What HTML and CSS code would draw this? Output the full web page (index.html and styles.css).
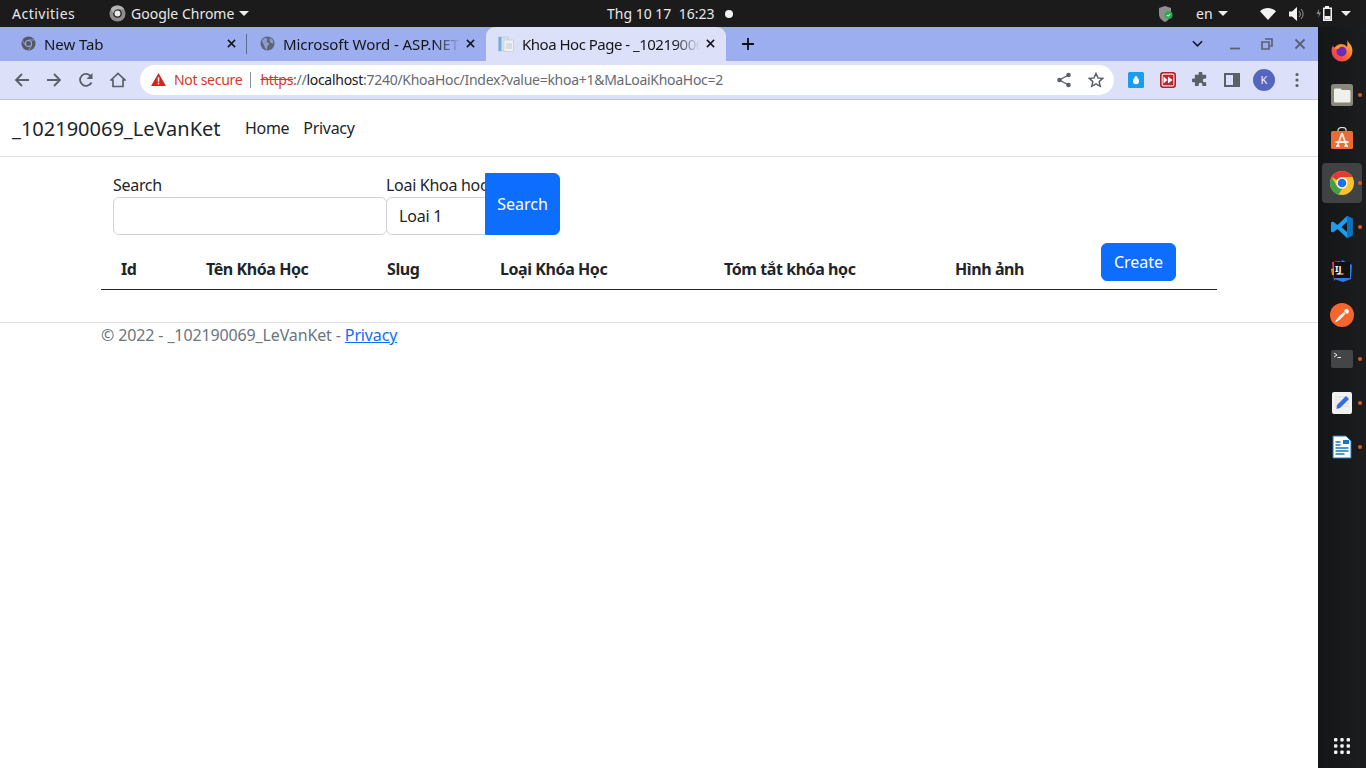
FILE: index.html
```html
<!DOCTYPE html>
<html lang="vi">
<head>
<meta charset="utf-8">
<title>Khoa Hoc Page</title>
<link rel="stylesheet" href="styles.css">
</head>
<body>
<header class="topbar">
  <span class="activities">Activities</span>
  <span class="app">
    <svg class="app-icon" viewBox="0 0 18 18"><circle cx="9" cy="9" r="8.5" fill="#8d8d8d"/><circle cx="9" cy="9" r="4.6" fill="#1c1c1c"/><circle cx="9" cy="9" r="3.2" fill="#e8e8e8"/><path d="M9 4.4h7.2A8.5 8.5 0 0 0 2 4.2l3 4.6A4.6 4.6 0 0 1 9 4.4z" fill="#b5b5b5"/></svg>
    Google Chrome
    <i class="caret"></i>
  </span>
  <span class="clock">Thg 10 17&nbsp;&nbsp;16:23</span>
  <i class="rec-dot"></i>
  <span class="tray">
    <svg class="shield" viewBox="0 0 16 18"><path d="M7 1l6 2v6c0 4-3 6.500-6 8-3-1.500-6-4-6-8V3z" fill="#8e8e8e"/><circle cx="10.500" cy="10" r="4" fill="#2fa84f"/><path d="M8.800 10l1.300 1.300 2.200-2.400" stroke="#fff" fill="none"/></svg>
    <span class="lang">en</span><i class="caret"></i>
    <svg class="wifi" viewBox="0 0 16 12"><path d="M0 3.200C4.500-1 11.500-1 16 3.200L8 12z" fill="#f2f2f2"/></svg>
    <svg class="volume" viewBox="0 0 15 14"><path d="M0 4.500h3L8 0v14L3 9.500H0z" fill="#f2f2f2"/><path d="M10 4a4 4 0 0 1 0 6M12 2a7 7 0 0 1 0 10" fill="none" stroke="#9a9a9a"/></svg>
    <svg class="battery" viewBox="0 0 17 15"><path d="M3 3L0.500 8H3L2 12l3-5.500H3z" fill="#8a8a8a"/><path d="M9 1.500V0h4v1.500h3V15H7V1.500z" fill="#f2f2f2"/><rect x="8.500" y="3" width="6" height="10.500" fill="#1c1c1c"/><rect x="8.500" y="10" width="6" height="3.500" fill="#f2f2f2"/></svg>
    <i class="caret caret-end"></i>
  </span>
</header>

<div class="desktop">
  <main class="browser">
    <div class="tabstrip">
      <div class="tab">
        <svg class="favicon" viewBox="0 0 16 16"><circle cx="8" cy="8" r="7.500" fill="#555a60"/><circle cx="8" cy="8" r="3.800" fill="#9badf0"/><circle cx="8" cy="8" r="2.700" fill="#555a60"/><path d="M8 4.200h6.500M4.700 10L1.500 4.500M11.300 10L8 15.500" stroke="#9badf0" stroke-width=".8"/></svg>
        <span class="tab-title">New Tab</span>
        <svg class="tab-close" viewBox="0 0 10 10"><path d="M1 1l8 8M9 1l-8 8" stroke="#15161a" stroke-width="1.700"/></svg>
      </div>
      <i class="tab-sep"></i>
      <div class="tab">
        <svg class="favicon" viewBox="0 0 16 16"><circle cx="8" cy="8" r="7.500" fill="#5f6672"/><path d="M2 5l3-3 3 1-1 3 3 2-2 3-1 4-2-3-1-3zM11 2l3 3v3l-3-1-1-3z" fill="#9badf0" opacity=".75"/></svg>
        <span class="tab-title">Microsoft Word - ASP.NET Core MVC</span>
        <svg class="tab-close" viewBox="0 0 10 10"><path d="M1 1l8 8M9 1l-8 8" stroke="#15161a" stroke-width="1.700"/></svg>
      </div>
      <div class="tab tab-active">
        <svg class="favicon" viewBox="0 0 16 16"><rect x="0.500" y="1" width="10" height="14" fill="#d8e2ee" stroke="#b8c4d4" stroke-width=".6"/><rect x="0.500" y="1" width="3" height="14" fill="#74aede"/><rect x="6" y="4" width="9.500" height="11.500" fill="#eef0f4" stroke="#c0c4cc" stroke-width=".6"/><path d="M8 8h6M8 10h6M8 12h6" stroke="#c4c8d0"/></svg>
        <span class="tab-title">Khoa Hoc Page - _102190069_LeVanKet</span>
        <svg class="tab-close" viewBox="0 0 10 10"><path d="M1 1l8 8M9 1l-8 8" stroke="#15161a" stroke-width="1.700"/></svg>
      </div>
      <svg class="new-tab" viewBox="0 0 12 12"><path d="M6 0v12M0 6h12" stroke="#111" stroke-width="1.800"/></svg>
      <svg class="tab-search" viewBox="0 0 12 8"><path d="M1 1l5 5 5-5" fill="none" stroke="#15161a" stroke-width="1.700"/></svg>
      <svg class="win-btn win-min" viewBox="0 0 12 12"><path d="M1 10.500h10" stroke="#5a6272" stroke-width="1.800"/></svg>
      <svg class="win-btn win-max" viewBox="0 0 12 12"><path d="M4 1h7v7H9M1 4h7v7H1z" fill="none" stroke="#5a6272" stroke-width="1.700"/></svg>
      <svg class="win-btn win-close" viewBox="0 0 12 12"><path d="M1.500 1.500l9 9M10.500 1.500l-9 9" stroke="#5a6272" stroke-width="1.800"/></svg>
    </div>

    <div class="toolbar">
      <svg class="tool tool-first" viewBox="0 0 16 16"><path d="M15 8H2M8 2L2 8l6 6" fill="none" stroke="#5a6068" stroke-width="1.800"/></svg>
      <svg class="tool" viewBox="0 0 16 16"><path d="M1 8h13M8 2l6 6-6 6" fill="none" stroke="#5a6068" stroke-width="1.800"/></svg>
      <svg class="tool" viewBox="0 0 16 16"><path d="M13.500 10.500A6 6 0 1 1 13 4.500" fill="none" stroke="#5a6068" stroke-width="1.800"/><path d="M14.500 1v6h-6z" fill="#5a6068"/></svg>
      <svg class="tool" viewBox="0 0 16 16"><path d="M1 8l7-6.500L15 8h-2v6.500H3V8z" fill="none" stroke="#5a6068" stroke-width="1.700"/></svg>
      <div class="omnibox">
        <svg class="warn" viewBox="0 0 16 14"><path d="M8 0l8 14H0z" fill="#d0281f"/><path d="M7.200 4.500h1.600v5H7.200zM7.200 10.500h1.600v1.600H7.200z" fill="#fff"/></svg>
        <span class="not-secure">Not secure</span>
        <i class="omni-sep"></i>
        <span class="url"><s class="scheme">https</s>://<b class="host">localhost</b>:7240/KhoaHoc/Index?value=khoa+1&amp;MaLoaiKhoaHoc=2</span>
        <svg class="omni-icon omni-share" viewBox="0 0 16 16"><path d="M12.500 3L3.500 8l9 5" fill="none" stroke="#5a6068" stroke-width="1.400"/><circle cx="12.500" cy="3" r="2.300" fill="#5a6068"/><circle cx="3.500" cy="8" r="2.300" fill="#5a6068"/><circle cx="12.500" cy="13" r="2.300" fill="#5a6068"/></svg>
        <svg class="omni-icon omni-star" viewBox="0 0 16 16"><path d="M8 1.500l2 4.400 4.800.5-3.600 3.200 1 4.700L8 11.900l-4.200 2.400 1-4.700L1.200 6.400 6 5.900z" fill="none" stroke="#5a6068" stroke-width="1.500"/></svg>
      </div>
      <div class="extensions">
        <svg class="ext ext-first" viewBox="0 0 16 16"><rect width="16" height="16" rx="1.500" fill="#1a9cf0"/><path d="M8 3.500c2 2.700 3 4.200 3 5.700a3 3 0 0 1-6 0c0-1.500 1-3 3-5.700z" fill="#fff"/></svg>
        <svg class="ext" viewBox="0 0 16 16"><rect x="0.800" y="0.800" width="14.400" height="14.400" rx="2.500" fill="#f6e4e4" stroke="#b02026" stroke-width="1.600"/><rect x="2.800" y="2.800" width="10.400" height="10.400" rx="1" fill="#c4242a"/><path d="M3.500 4.500l4 3.500-4 3.500zM8 4.500l4.500 3.500L8 11.500z" fill="#fff"/></svg>
        <svg class="ext" viewBox="0 0 16 16"><path d="M6 1.500a2 2 0 0 1 4 0V3h4v4h-1.500a2 2 0 0 0 0 4H14v4h-4v-1.500a2 2 0 0 0-4 0V15H2v-4H.5a2 2 0 0 1 0-4H2V3h4z" fill="#5a6068" transform="translate(1 0) scale(.94)"/></svg>
        <svg class="ext" viewBox="0 0 16 16"><path d="M1 2h14v12H1z" fill="none" stroke="#5a6068" stroke-width="2"/><rect x="9" y="2" width="6" height="12" fill="#5a6068"/></svg>
        <span class="avatar">K</span>
        <svg class="kebab" viewBox="0 0 4 16"><circle cx="2" cy="2.500" r="1.600" fill="#5a6068"/><circle cx="2" cy="8" r="1.600" fill="#5a6068"/><circle cx="2" cy="13.500" r="1.600" fill="#5a6068"/></svg>
      </div>
    </div>

    <div class="page">
      <nav class="navbar">
        <a class="brand">_102190069_LeVanKet</a>
        <a class="nav-link">Home</a>
        <a class="nav-link">Privacy</a>
      </nav>
      <section class="container">
        <form class="search-form">
          <div class="field field-search">
            <label class="field-label" for="q">Search</label>
            <input class="control" id="q" type="text">
          </div>
          <div class="field field-type">
            <label class="field-label" for="t">Loai Khoa hoc</label>
            <select class="control control-select" id="t"><option>Loai 1</option></select>
          </div>
          <button class="btn" type="button">Search</button>
        </form>
        <table class="grid">
          <colgroup>
            <col class="c1"><col class="c2"><col class="c3"><col class="c4"><col class="c5"><col class="c6"><col class="c7">
          </colgroup>
          <thead>
            <tr>
              <th class="th-id">Id</th>
              <th>Tên Khóa Học</th>
              <th>Slug</th>
              <th>Loại Khóa Học</th>
              <th>Tóm tắt khóa học</th>
              <th>Hình ảnh</th>
              <th><a class="btn btn-create">Create</a></th>
            </tr>
          </thead>
        </table>
      </section>
      <footer class="footer">
        <div class="footer-text">© 2022 - _102190069_LeVanKet - <a class="footer-link">Privacy</a></div>
      </footer>
    </div>
  </main>

  <aside class="dock">
    <div class="dock-item">
      <svg class="dock-icon" viewBox="0 0 24 24"><defs><linearGradient id="ff" x1="1" y1="0" x2="0" y2="1"><stop offset="0" stop-color="#ffc83a"/><stop offset=".5" stop-color="#ff6a2a"/><stop offset="1" stop-color="#e6286e"/></linearGradient></defs><path d="M17 1c1 2.500 5.500 5 5.500 11A10.500 10.500 0 0 1 1.500 12c0-2 .5-4 1.500-5.500C3.500 8 4 8.500 5 9c1-3 3.500-4 6-4 2.500 0 5 1 6 3 .5-2.500 .5-4.500 0-7z" fill="url(#ff)"/><circle cx="11.500" cy="12.500" r="5" fill="#6c2bc0"/><path d="M4 9c3-3 8-4 11-1-3-1-5 0-6 1 .5 1-2 1.500-5 0z" fill="#ff9a2a"/></svg>
    </div>
    <div class="dock-item dock-open">
      <svg class="dock-icon" viewBox="0 0 24 24"><rect x="1" y="1" width="22" height="22" rx="2.500" fill="#8b8779"/><path d="M4 7c0-1 .5-1.500 1.500-1.500h5L12 7h7c1 0 1.500 .5 1.500 1.500V18c0 1-.5 1.500-1.500 1.500H5.500C4.500 19.500 4 19 4 18z" fill="#efefec"/></svg>
    </div>
    <div class="dock-item">
      <svg class="dock-icon" viewBox="0 0 24 24"><path d="M8 4V3a4 2.500 0 0 1 8 0v1" fill="none" stroke="#e8e0d8" stroke-width="1.200"/><rect x="1" y="4" width="22" height="18" rx="1.500" fill="#ec6a36"/><path d="M12 6L7.500 19M12 6l4.500 13M5.500 15h13M6 19h3.500M14.500 19H18" fill="none" stroke="#fbeee8" stroke-width="1.800"/></svg>
    </div>
    <div class="dock-item dock-open dock-active">
      <svg class="dock-icon" viewBox="0 0 24 24"><circle cx="12" cy="12" r="12" fill="#fbc02d"/><path d="M12 0a12 12 0 0 1 10.400 6H12a6 6 0 0 0-5.200 3L1.600 6A12 12 0 0 1 12 0z" fill="#e53935"/><path d="M1.600 6l5.200 9a6 6 0 0 0 5.200 3l-3.500 5.600A12 12 0 0 1 1.600 6z" fill="#43a047"/><circle cx="12" cy="12" r="5.600" fill="#fff"/><circle cx="12" cy="12" r="4.300" fill="#1a73e8"/></svg>
    </div>
    <div class="dock-item dock-open">
      <svg class="dock-icon" viewBox="0 0 24 24"><path d="M17 1l5.500 2.500v17L17 23 7.500 14 3 17.500 1 16.500v-9L3 6.500 7.500 10zM17 7l-5.500 5 5.500 5z" fill="#1f9cf0"/><path d="M17 1l5.500 2.500v17L17 23z" fill="#0a72c0"/></svg>
    </div>
    <div class="dock-item">
      <svg class="dock-icon" viewBox="0 0 24 24"><path d="M2 3l8-1 2 8-8 12z" fill="#e6337a"/><path d="M12 1l10 5-1 14-8 3-9-3z" fill="#2a7cf0"/><path d="M1 10l5-2v8H2z" fill="#f58a1f"/><rect x="4" y="3" width="16" height="16" fill="#111"/><path d="M6.500 15h7" stroke="#fff"/></svg>
      <span class="ij">IJ</span>
    </div>
    <div class="dock-item">
      <svg class="dock-icon" viewBox="0 0 24 24"><circle cx="12" cy="12" r="12" fill="#f4662d"/><path d="M5 19.500c1-3 5-7.500 9-10.500l1.500 1.500C12.500 14.500 8 18.500 5 19.500zM14 8a2.500 2.500 0 1 1 3 3z" fill="#fff"/></svg>
    </div>
    <div class="dock-item dock-open">
      <svg class="dock-icon" viewBox="0 0 24 24"><rect x="1" y="3" width="22" height="18" rx="2" fill="#444546"/><path d="M4 6l3 2-3 2M7.500 10.500H11" fill="none" stroke="#e8e8e8" stroke-width="1"/></svg>
    </div>
    <div class="dock-item dock-open">
      <svg class="dock-icon" viewBox="0 0 24 24"><rect x="2" y="1" width="20" height="22" rx="2" fill="#f1f1f0"/><path d="M5 6h14M5 9h14M5 12h14M5 15h14" stroke="#dcdcdc"/><path d="M7 14L16 5l3 3-9 9-3.500 1z" fill="#2f6ee0"/></svg>
    </div>
    <div class="dock-item dock-open">
      <svg class="dock-icon" viewBox="0 0 24 24"><path d="M3 1h13l5 5v17H3z" fill="#fff" stroke="#1976b8" stroke-width="1"/><rect x="13" y="5" width="6" height="4" fill="#1976b8"/><path d="M5.500 7h5M5.500 10h5M5.500 13h13M5.500 16h13M5.500 19h9" stroke="#1976b8" stroke-width="1.400"/></svg>
    </div>
    <div class="dock-grid">
      <svg class="grid-icon" viewBox="0 0 16 16"><g fill="#f2f2f2"><rect x="0" y="0" width="3.400" height="3.400" rx="1"/><rect x="6.300" y="0" width="3.400" height="3.400" rx="1"/><rect x="12.600" y="0" width="3.400" height="3.400" rx="1"/><rect x="0" y="6.300" width="3.400" height="3.400" rx="1"/><rect x="6.300" y="6.300" width="3.400" height="3.400" rx="1"/><rect x="12.600" y="6.300" width="3.400" height="3.400" rx="1"/><rect x="0" y="12.600" width="3.400" height="3.400" rx="1"/><rect x="6.300" y="12.600" width="3.400" height="3.400" rx="1"/><rect x="12.600" y="12.600" width="3.400" height="3.400" rx="1"/></g></svg>
    </div>
  </aside>
</div>
</body>
</html>
```
FILE: styles.css
```css
* { box-sizing: border-box; }
html, body { margin: 0; height: 100%; overflow: hidden; }
body {
  display: flex;
  flex-direction: column;
  font-family: "Noto Sans", "Liberation Sans", sans-serif;
  font-size: 16px;
  color: #212529;
  background: #fff;
}
svg { display: block; flex: none; }

/* GNOME top bar */
.topbar {
  height: 27px;
  flex: none;
  display: flex;
  align-items: center;
  background: #1b1b1b;
  color: #e8e8e8;
  font-size: 14px;
  padding-left: 12px;
}
.activities { width: 97px; letter-spacing: .5px; }
.app { display: flex; align-items: center; width: 498px; }
.app-icon { width: 17px; height: 17px; margin-right: 5px; }
.caret {
  display: block;
  width: 0;
  height: 0;
  margin-left: 5px;
  border-left: 5px solid transparent;
  border-right: 5px solid transparent;
  border-top: 5px solid #ededed;
}
.clock { width: 118px; white-space: nowrap; }
.rec-dot { width: 8px; height: 8px; border-radius: 50%; background: #f2f2f2; }
.tray { display: flex; align-items: center; margin-left: 425px; }
.shield { width: 16px; height: 18px; }
.lang { margin-left: 22px; }
.wifi { width: 16px; height: 12px; margin-left: 32px; }
.volume { width: 15px; height: 14px; margin-left: 13px; }
.battery { width: 17px; height: 15px; margin-left: 12px; }
.caret-end { margin-left: 8px; }

.desktop { flex: 1; display: flex; min-height: 0; }
.browser { width: 1318px; display: flex; flex-direction: column; }

/* Tab strip */
.tabstrip {
  height: 34px;
  flex: none;
  display: flex;
  align-items: center;
  background: #9cadf0;
  padding-left: 8px;
  color: #15161a;
  font-size: 15px;
}
.tab {
  width: 239px;
  height: 34px;
  display: flex;
  align-items: center;
  padding: 0 11px 1px 13px;
}
.tab-active {
  width: 240px;
  padding-left: 12px;
  background: #dce1f9;
  border-radius: 9px 9px 0 0;
}
.tab-sep { width: 1px; height: 20px; background: #5d6a92; margin-left: -1px; }
.favicon { width: 15px; height: 15px; }
.tab-active .favicon { width: 16px; height: 16px; }
.tab-title {
  flex: 1;
  min-width: 0;
  margin: 0 6px 0 8px;
  overflow: hidden;
  white-space: nowrap;
  letter-spacing: -.08px;
  -webkit-mask-image: linear-gradient(to left, transparent 0, #000 26px);
  mask-image: linear-gradient(to left, transparent 0, #000 26px);
}
.tab-active .tab-title { letter-spacing: -.5px; }
.tab-close { width: 9px; height: 9px; }
.new-tab { width: 12px; height: 12px; margin-left: 16px; }
.tab-search { width: 11px; height: 8px; margin-left: 438px; }
.win-btn { width: 12px; height: 12px; }
.win-min { margin-left: 26px; }
.win-max { margin-left: 20px; }
.win-close { margin-left: 21px; }

/* Toolbar */
.toolbar {
  height: 39px;
  flex: none;
  display: flex;
  align-items: center;
  background: #dce1f9;
  border-bottom: 1px solid #bfc4dc;
  padding-bottom: 1px;
}
.tool { width: 16px; height: 16px; margin-left: 16px; }
.tool-first { margin-left: 14px; }
.omnibox {
  width: 974px;
  height: 30px;
  margin-left: 14px;
  display: flex;
  align-items: center;
  background: #fff;
  border-radius: 15px;
  padding-left: 11px;
  font-size: 14px;
  letter-spacing: -.28px;
  white-space: nowrap;
}
.warn { width: 15px; height: 13px; }
.not-secure { color: #d33a2c; margin-left: 8px; }
.omni-sep { width: 1px; height: 16px; background: #8d9099; margin: 0 9px 0 8px; }
.url { color: #676b72; flex: 1; min-width: 0; overflow: hidden; }
.scheme { color: #d33a2c; }
.host { color: #202124; font-weight: 400; }
.omni-icon { width: 16px; height: 16px; }
.omni-star { margin: 0 10px 0 16px; }
.extensions { display: flex; align-items: center; margin-left: 14px; }
.ext { width: 16px; height: 16px; margin-left: 16px; }
.ext-first { margin-left: 0; }
.avatar {
  width: 22px;
  height: 22px;
  margin-left: 13px;
  border-radius: 50%;
  background: #5466bd;
  color: #f0f2ff;
  font-size: 11px;
  text-align: center;
  line-height: 22px;
}
.kebab { width: 4px; height: 16px; margin-left: 20px; }

/* Page */
.page { flex: 1; background: #fff; min-height: 0; }
.navbar {
  height: 57px;
  display: flex;
  align-items: center;
  padding: 0 12px;
  border-bottom: 1px solid #dee2e6;
  white-space: nowrap;
}
.brand { font-size: 20px; width: 233px; color: #212529; }
.nav-link { margin-right: 14px; color: #212529; letter-spacing: -.3px; }
.container { width: 1116px; margin-left: 101px; }
.search-form { display: flex; padding: 16px 0 0 12px; }
.field { display: flex; flex-direction: column; }
.field-search { width: 274px; }
.field-type { width: 99px; margin-left: -1px; overflow: hidden; white-space: nowrap; }
.field-label { line-height: 24px; letter-spacing: -.3px; }
.control {
  display: block;
  height: 38px;
  width: 100%;
  border: 1px solid #ced4da;
  border-radius: 6px;
  background: #fff;
  font: inherit;
  letter-spacing: -.2px;
  color: #212529;
  padding: 6px 12px;
  outline: none;
}
.control-select { width: 140px; appearance: none; -webkit-appearance: none; }
.btn {
  display: flex;
  align-items: center;
  justify-content: center;
  width: 75px;
  border: 1px solid #0d6efd;
  border-radius: 0 6px 6px 0;
  background: #0d6efd;
  color: #fff;
  font: inherit;
  padding: 0;
}
.btn-create {
  height: 38px;
  font-weight: 400;
  border-radius: 6px;
}
.grid { width: 1116px; table-layout: fixed; border-collapse: collapse; }
.grid th {
  padding: 8px;
  text-align: left;
  vertical-align: bottom;
  font-weight: 700;
  line-height: 24px;
  letter-spacing: -.42px;
  border-bottom: 1px solid #212529;
}
.grid th.th-id { padding-left: 20px; }
.btn-create { letter-spacing: 0; }
.c1 { width: 97px; }
.c2 { width: 181px; }
.c3 { width: 113px; }
.c4 { width: 224px; }
.c5 { width: 231px; }
.c6 { width: 146px; }
.c7 { width: 124px; }
.footer { margin-top: 32px; border-top: 1px solid #dee2e6; }
.footer-text { margin-left: 101px; line-height: 24px; color: #6c757d; letter-spacing: -.13px; }
.footer-link { color: #0d6efd; text-decoration: underline; }

/* Dock */
.dock {
  width: 48px;
  display: flex;
  flex-direction: column;
  padding-top: 2px;
  background: linear-gradient(90deg, #131516, #1b1d1f);
}
.dock-item {
  position: relative;
  height: 44px;
  display: flex;
  align-items: center;
  padding-left: 12px;
}
.dock-icon { width: 24px; height: 24px; }
.dock-open::after {
  content: "";
  position: absolute;
  left: 40px;
  top: 20px;
  width: 4px;
  height: 4px;
  border-radius: 50%;
  background: #e2551f;
}
.dock-active::before {
  content: "";
  position: absolute;
  left: 4px;
  top: 2px;
  width: 40px;
  height: 40px;
  border-radius: 4px;
  background: #404244;
}
.dock-active .dock-icon { position: relative; }
.ij {
  position: absolute;
  left: 17px;
  top: 13px;
  color: #fff;
  font-size: 9px;
  font-weight: 700;
}
.dock-grid { margin-top: auto; height: 44px; padding: 14px 0 0 16px; }
.grid-icon { width: 16px; height: 16px; }
```
